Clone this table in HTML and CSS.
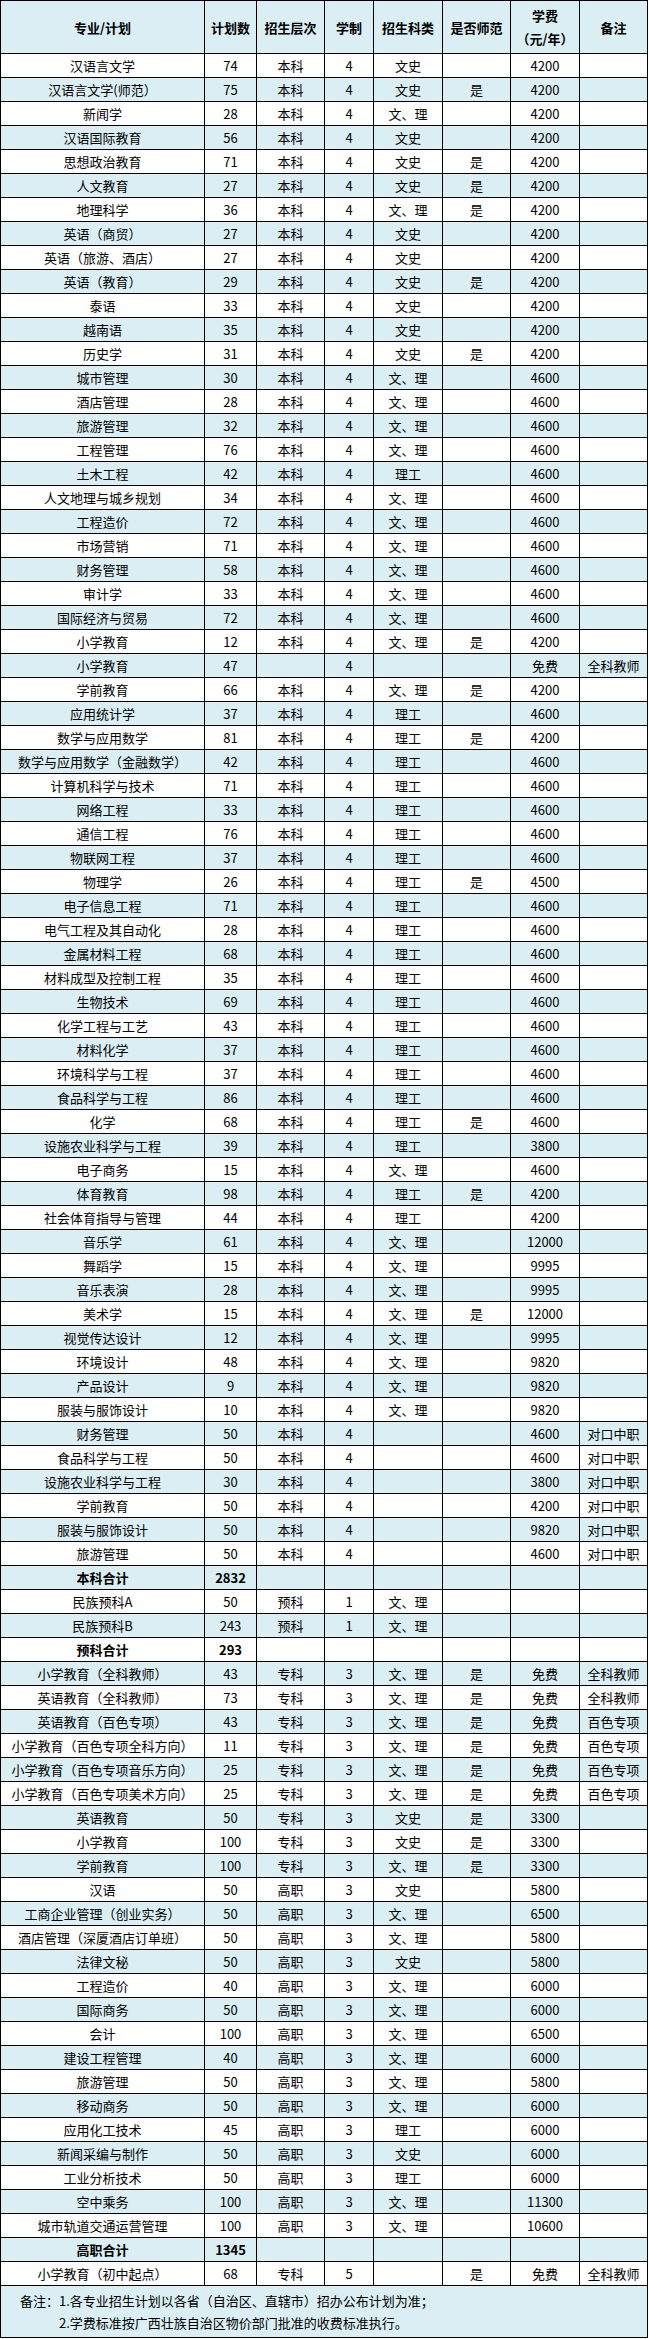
FILE: index.html
```html
<!DOCTYPE html>
<html lang="zh-CN">
<head>
<meta charset="utf-8">
<title>招生计划</title>
<link rel="stylesheet" href="styles.css">
</head>
<body>
<table class="plan">
<colgroup>
<col class="c-name"><col class="c-num"><col class="c-level"><col class="c-years"><col class="c-type"><col class="c-normal"><col class="c-fee"><col class="c-note">
</colgroup>
<thead>
<tr class="head"><th>专业/计划</th><th>计划数</th><th>招生层次</th><th>学制</th><th>招生科类</th><th>是否师范</th><th>学费<br>（元/年）</th><th>备注</th></tr>
</thead>
<tbody>
<tr><td>汉语言文学</td><td>74</td><td>本科</td><td>4</td><td>文史</td><td></td><td>4200</td><td></td></tr>
<tr><td>汉语言文学(师范）</td><td>75</td><td>本科</td><td>4</td><td>文史</td><td>是</td><td>4200</td><td></td></tr>
<tr><td>新闻学</td><td>28</td><td>本科</td><td>4</td><td>文、理</td><td></td><td>4200</td><td></td></tr>
<tr><td>汉语国际教育</td><td>56</td><td>本科</td><td>4</td><td>文史</td><td></td><td>4200</td><td></td></tr>
<tr><td>思想政治教育</td><td>71</td><td>本科</td><td>4</td><td>文史</td><td>是</td><td>4200</td><td></td></tr>
<tr><td>人文教育</td><td>27</td><td>本科</td><td>4</td><td>文史</td><td>是</td><td>4200</td><td></td></tr>
<tr><td>地理科学</td><td>36</td><td>本科</td><td>4</td><td>文、理</td><td>是</td><td>4200</td><td></td></tr>
<tr><td>英语（商贸）</td><td>27</td><td>本科</td><td>4</td><td>文史</td><td></td><td>4200</td><td></td></tr>
<tr><td>英语（旅游、酒店）</td><td>27</td><td>本科</td><td>4</td><td>文史</td><td></td><td>4200</td><td></td></tr>
<tr><td>英语（教育）</td><td>29</td><td>本科</td><td>4</td><td>文史</td><td>是</td><td>4200</td><td></td></tr>
<tr><td>泰语</td><td>33</td><td>本科</td><td>4</td><td>文史</td><td></td><td>4200</td><td></td></tr>
<tr><td>越南语</td><td>35</td><td>本科</td><td>4</td><td>文史</td><td></td><td>4200</td><td></td></tr>
<tr><td>历史学</td><td>31</td><td>本科</td><td>4</td><td>文史</td><td>是</td><td>4200</td><td></td></tr>
<tr><td>城市管理</td><td>30</td><td>本科</td><td>4</td><td>文、理</td><td></td><td>4600</td><td></td></tr>
<tr><td>酒店管理</td><td>28</td><td>本科</td><td>4</td><td>文、理</td><td></td><td>4600</td><td></td></tr>
<tr><td>旅游管理</td><td>32</td><td>本科</td><td>4</td><td>文、理</td><td></td><td>4600</td><td></td></tr>
<tr><td>工程管理</td><td>76</td><td>本科</td><td>4</td><td>文、理</td><td></td><td>4600</td><td></td></tr>
<tr><td>土木工程</td><td>42</td><td>本科</td><td>4</td><td>理工</td><td></td><td>4600</td><td></td></tr>
<tr><td>人文地理与城乡规划</td><td>34</td><td>本科</td><td>4</td><td>文、理</td><td></td><td>4600</td><td></td></tr>
<tr><td>工程造价</td><td>72</td><td>本科</td><td>4</td><td>文、理</td><td></td><td>4600</td><td></td></tr>
<tr><td>市场营销</td><td>71</td><td>本科</td><td>4</td><td>文、理</td><td></td><td>4600</td><td></td></tr>
<tr><td>财务管理</td><td>58</td><td>本科</td><td>4</td><td>文、理</td><td></td><td>4600</td><td></td></tr>
<tr><td>审计学</td><td>33</td><td>本科</td><td>4</td><td>文、理</td><td></td><td>4600</td><td></td></tr>
<tr><td>国际经济与贸易</td><td>72</td><td>本科</td><td>4</td><td>文、理</td><td></td><td>4600</td><td></td></tr>
<tr><td>小学教育</td><td>12</td><td>本科</td><td>4</td><td>文、理</td><td>是</td><td>4200</td><td></td></tr>
<tr><td>小学教育</td><td>47</td><td></td><td>4</td><td></td><td></td><td>免费</td><td>全科教师</td></tr>
<tr><td>学前教育</td><td>66</td><td>本科</td><td>4</td><td>文、理</td><td>是</td><td>4200</td><td></td></tr>
<tr><td>应用统计学</td><td>37</td><td>本科</td><td>4</td><td>理工</td><td></td><td>4600</td><td></td></tr>
<tr><td>数学与应用数学</td><td>81</td><td>本科</td><td>4</td><td>理工</td><td>是</td><td>4200</td><td></td></tr>
<tr><td>数学与应用数学（金融数学）</td><td>42</td><td>本科</td><td>4</td><td>理工</td><td></td><td>4600</td><td></td></tr>
<tr><td>计算机科学与技术</td><td>71</td><td>本科</td><td>4</td><td>理工</td><td></td><td>4600</td><td></td></tr>
<tr><td>网络工程</td><td>33</td><td>本科</td><td>4</td><td>理工</td><td></td><td>4600</td><td></td></tr>
<tr><td>通信工程</td><td>76</td><td>本科</td><td>4</td><td>理工</td><td></td><td>4600</td><td></td></tr>
<tr><td>物联网工程</td><td>37</td><td>本科</td><td>4</td><td>理工</td><td></td><td>4600</td><td></td></tr>
<tr><td>物理学</td><td>26</td><td>本科</td><td>4</td><td>理工</td><td>是</td><td>4500</td><td></td></tr>
<tr><td>电子信息工程</td><td>71</td><td>本科</td><td>4</td><td>理工</td><td></td><td>4600</td><td></td></tr>
<tr><td>电气工程及其自动化</td><td>28</td><td>本科</td><td>4</td><td>理工</td><td></td><td>4600</td><td></td></tr>
<tr><td>金属材料工程</td><td>68</td><td>本科</td><td>4</td><td>理工</td><td></td><td>4600</td><td></td></tr>
<tr><td>材料成型及控制工程</td><td>35</td><td>本科</td><td>4</td><td>理工</td><td></td><td>4600</td><td></td></tr>
<tr><td>生物技术</td><td>69</td><td>本科</td><td>4</td><td>理工</td><td></td><td>4600</td><td></td></tr>
<tr><td>化学工程与工艺</td><td>43</td><td>本科</td><td>4</td><td>理工</td><td></td><td>4600</td><td></td></tr>
<tr><td>材料化学</td><td>37</td><td>本科</td><td>4</td><td>理工</td><td></td><td>4600</td><td></td></tr>
<tr><td>环境科学与工程</td><td>37</td><td>本科</td><td>4</td><td>理工</td><td></td><td>4600</td><td></td></tr>
<tr><td>食品科学与工程</td><td>86</td><td>本科</td><td>4</td><td>理工</td><td></td><td>4600</td><td></td></tr>
<tr><td>化学</td><td>68</td><td>本科</td><td>4</td><td>理工</td><td>是</td><td>4600</td><td></td></tr>
<tr><td>设施农业科学与工程</td><td>39</td><td>本科</td><td>4</td><td>理工</td><td></td><td>3800</td><td></td></tr>
<tr><td>电子商务</td><td>15</td><td>本科</td><td>4</td><td>文、理</td><td></td><td>4600</td><td></td></tr>
<tr><td>体育教育</td><td>98</td><td>本科</td><td>4</td><td>理工</td><td>是</td><td>4200</td><td></td></tr>
<tr><td>社会体育指导与管理</td><td>44</td><td>本科</td><td>4</td><td>理工</td><td></td><td>4200</td><td></td></tr>
<tr><td>音乐学</td><td>61</td><td>本科</td><td>4</td><td>文、理</td><td></td><td>12000</td><td></td></tr>
<tr><td>舞蹈学</td><td>15</td><td>本科</td><td>4</td><td>文、理</td><td></td><td>9995</td><td></td></tr>
<tr><td>音乐表演</td><td>28</td><td>本科</td><td>4</td><td>文、理</td><td></td><td>9995</td><td></td></tr>
<tr><td>美术学</td><td>15</td><td>本科</td><td>4</td><td>文、理</td><td>是</td><td>12000</td><td></td></tr>
<tr><td>视觉传达设计</td><td>12</td><td>本科</td><td>4</td><td>文、理</td><td></td><td>9995</td><td></td></tr>
<tr><td>环境设计</td><td>48</td><td>本科</td><td>4</td><td>文、理</td><td></td><td>9820</td><td></td></tr>
<tr><td>产品设计</td><td>9</td><td>本科</td><td>4</td><td>文、理</td><td></td><td>9820</td><td></td></tr>
<tr><td>服装与服饰设计</td><td>10</td><td>本科</td><td>4</td><td>文、理</td><td></td><td>9820</td><td></td></tr>
<tr><td>财务管理</td><td>50</td><td>本科</td><td>4</td><td></td><td></td><td>4600</td><td>对口中职</td></tr>
<tr><td>食品科学与工程</td><td>50</td><td>本科</td><td>4</td><td></td><td></td><td>4600</td><td>对口中职</td></tr>
<tr><td>设施农业科学与工程</td><td>30</td><td>本科</td><td>4</td><td></td><td></td><td>3800</td><td>对口中职</td></tr>
<tr><td>学前教育</td><td>50</td><td>本科</td><td>4</td><td></td><td></td><td>4200</td><td>对口中职</td></tr>
<tr><td>服装与服饰设计</td><td>50</td><td>本科</td><td>4</td><td></td><td></td><td>9820</td><td>对口中职</td></tr>
<tr><td>旅游管理</td><td>50</td><td>本科</td><td>4</td><td></td><td></td><td>4600</td><td>对口中职</td></tr>
<tr class="total"><td>本科合计</td><td>2832</td><td></td><td></td><td></td><td></td><td></td><td></td></tr>
<tr><td>民族预科A</td><td>50</td><td>预科</td><td>1</td><td>文、理</td><td></td><td></td><td></td></tr>
<tr><td>民族预科B</td><td>243</td><td>预科</td><td>1</td><td>文、理</td><td></td><td></td><td></td></tr>
<tr class="total"><td>预科合计</td><td>293</td><td></td><td></td><td></td><td></td><td></td><td></td></tr>
<tr><td>小学教育（全科教师）</td><td>43</td><td>专科</td><td>3</td><td>文、理</td><td>是</td><td>免费</td><td>全科教师</td></tr>
<tr><td>英语教育（全科教师）</td><td>73</td><td>专科</td><td>3</td><td>文、理</td><td>是</td><td>免费</td><td>全科教师</td></tr>
<tr><td>英语教育（百色专项）</td><td>43</td><td>专科</td><td>3</td><td>文、理</td><td>是</td><td>免费</td><td>百色专项</td></tr>
<tr><td>小学教育（百色专项全科方向）</td><td>11</td><td>专科</td><td>3</td><td>文、理</td><td>是</td><td>免费</td><td>百色专项</td></tr>
<tr><td>小学教育（百色专项音乐方向）</td><td>25</td><td>专科</td><td>3</td><td>文、理</td><td>是</td><td>免费</td><td>百色专项</td></tr>
<tr><td>小学教育（百色专项美术方向）</td><td>25</td><td>专科</td><td>3</td><td>文、理</td><td>是</td><td>免费</td><td>百色专项</td></tr>
<tr><td>英语教育</td><td>50</td><td>专科</td><td>3</td><td>文史</td><td>是</td><td>3300</td><td></td></tr>
<tr><td>小学教育</td><td>100</td><td>专科</td><td>3</td><td>文史</td><td>是</td><td>3300</td><td></td></tr>
<tr><td>学前教育</td><td>100</td><td>专科</td><td>3</td><td>文、理</td><td>是</td><td>3300</td><td></td></tr>
<tr><td>汉语</td><td>50</td><td>高职</td><td>3</td><td>文史</td><td></td><td>5800</td><td></td></tr>
<tr><td>工商企业管理（创业实务）</td><td>50</td><td>高职</td><td>3</td><td>文、理</td><td></td><td>6500</td><td></td></tr>
<tr><td>酒店管理（深厦酒店订单班）</td><td>50</td><td>高职</td><td>3</td><td>文、理</td><td></td><td>5800</td><td></td></tr>
<tr><td>法律文秘</td><td>50</td><td>高职</td><td>3</td><td>文史</td><td></td><td>5800</td><td></td></tr>
<tr><td>工程造价</td><td>40</td><td>高职</td><td>3</td><td>文、理</td><td></td><td>6000</td><td></td></tr>
<tr><td>国际商务</td><td>50</td><td>高职</td><td>3</td><td>文、理</td><td></td><td>6000</td><td></td></tr>
<tr><td>会计</td><td>100</td><td>高职</td><td>3</td><td>文、理</td><td></td><td>6500</td><td></td></tr>
<tr><td>建设工程管理</td><td>40</td><td>高职</td><td>3</td><td>文、理</td><td></td><td>6000</td><td></td></tr>
<tr><td>旅游管理</td><td>50</td><td>高职</td><td>3</td><td>文、理</td><td></td><td>5800</td><td></td></tr>
<tr><td>移动商务</td><td>50</td><td>高职</td><td>3</td><td>文、理</td><td></td><td>6000</td><td></td></tr>
<tr><td>应用化工技术</td><td>45</td><td>高职</td><td>3</td><td>理工</td><td></td><td>6000</td><td></td></tr>
<tr><td>新闻采编与制作</td><td>50</td><td>高职</td><td>3</td><td>文史</td><td></td><td>6000</td><td></td></tr>
<tr><td>工业分析技术</td><td>50</td><td>高职</td><td>3</td><td>理工</td><td></td><td>6000</td><td></td></tr>
<tr><td>空中乘务</td><td>100</td><td>高职</td><td>3</td><td>文、理</td><td></td><td>11300</td><td></td></tr>
<tr><td>城市轨道交通运营管理</td><td>100</td><td>高职</td><td>3</td><td>文、理</td><td></td><td>10600</td><td></td></tr>
<tr class="total"><td>高职合计</td><td>1345</td><td></td><td></td><td></td><td></td><td></td><td></td></tr>
<tr><td>小学教育（初中起点）</td><td>68</td><td>专科</td><td>5</td><td></td><td>是</td><td>免费</td><td>全科教师</td></tr>
</tbody>
<tfoot>
<tr class="foot"><td colspan="8"><p class="note">备注：1.各专业招生计划以各省（自治区、直辖市）招办公布计划为准；</p><p class="note note-indent">2.学费标准按广西壮族自治区物价部门批准的收费标准执行。</p></td></tr>
</tfoot>
</table>
</body>
</html>
```
FILE: styles.css
```css
html, body {
  margin: 0;
  padding: 0;
  background: #ffffff;
}

.plan {
  table-layout: fixed;
  border-collapse: separate;
  border-spacing: 0;
  width: 648px;
  border-left: 1px solid #000;
  border-top: 1px solid #000;
  font-family: "Noto Sans CJK SC", "Noto Sans", sans-serif;
  font-size: 13px;
  color: #000;
}

.c-name { width: 204px; }
.c-num { width: 52px; }
.c-level { width: 68px; }
.c-years { width: 49px; }
.c-type { width: 69px; }
.c-normal { width: 68px; }
.c-fee { width: 69px; }
.c-note { width: 68px; }

.plan th,
.plan td {
  border-right: 1px solid #000;
  border-bottom: 1px solid #000;
  padding: 0;
  text-align: center;
  vertical-align: middle;
  white-space: nowrap;
  line-height: 16px;
}

.plan tbody tr {
  height: 24px;
}

.plan tbody tr:nth-child(even),
.plan .head,
.plan .foot {
  background: #daeef3;
}

.plan .head {
  height: 53px;
}

.plan th {
  font-weight: bold;
  line-height: 23px;
}

.plan .total td {
  font-weight: bold;
}

.plan .foot {
  height: 52px;
}

.plan .foot td {
  text-align: left;
  padding-left: 19px;
}

.note {
  margin: 0;
  line-height: 22px;
}

.note-indent {
  padding-left: 39px;
}
```
